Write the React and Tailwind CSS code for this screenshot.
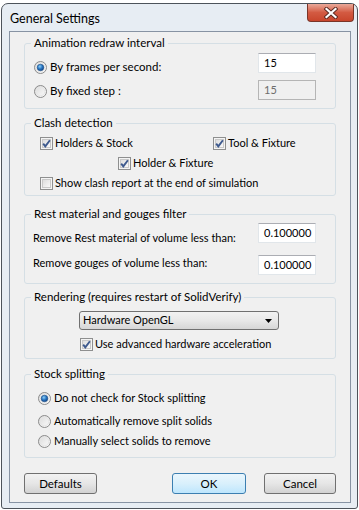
import React from "react";

const FONT = { fontFamily: "Lato, 'Liberation Sans', sans-serif" };

function Radio({ checked }) {
  return (
    <svg width="13" height="13" viewBox="0 0 13 13" className="shrink-0">
      <defs>
        <linearGradient id="rbg" x1="0" y1="0" x2="1" y2="1">
          <stop offset="0" stopColor="#d8d8d8" />
          <stop offset="1" stopColor="#ffffff" />
        </linearGradient>
        <radialGradient id="rdot" cx="0.4" cy="0.35" r="0.7">
          <stop offset="0" stopColor="#8fd0f7" />
          <stop offset="0.5" stopColor="#2a78c4" />
          <stop offset="1" stopColor="#0f3f80" />
        </radialGradient>
      </defs>
      <circle cx="6.5" cy="6.5" r="6" fill="url(#rbg)" stroke="#8b8b8b" strokeWidth="1" />
      <circle cx="6.5" cy="6.5" r="4.3" fill="none" stroke="#e6e6e6" strokeWidth="1" />
      {checked && <circle cx="6.5" cy="6.5" r="3.3" fill="url(#rdot)" stroke="#1d4f88" strokeWidth="0.6" />}
    </svg>
  );
}

function Check({ checked }) {
  return (
    <svg width="13" height="13" viewBox="0 0 13 13" className="shrink-0">
      <defs>
        <linearGradient id="cbg" x1="0" y1="0" x2="1" y2="1">
          <stop offset="0" stopColor="#dcdcdc" />
          <stop offset="1" stopColor="#fbfbfb" />
        </linearGradient>
      </defs>
      <rect x="0.5" y="0.5" width="12" height="12" fill="#f4f4f4" stroke="#8e8f8f" />
      <rect x="2.5" y="2.5" width="8" height="8" fill="url(#cbg)" stroke="#c9c9c9" />
      {checked && (
        <path d="M3.2 6.6 L5.3 9.4 L9.9 3.2" fill="none" stroke="#3e5a8e" strokeWidth="1.9" />
      )}
    </svg>
  );
}

function Group({ title, className, children }) {
  return (
    <div className={`relative mx-[14px] rounded-[3px] border border-[#d5dfe5] ${className}`}>
      <span className="absolute left-[6px] top-[-9px] bg-[#f0f0f0] px-[3px] text-[11.5px] leading-[16px] text-black">
        {title}
      </span>
      {children}
    </div>
  );
}

function Field({ value, disabled }) {
  return (
    <div
      className={`flex h-[20px] w-[58px] items-center border pl-[5px] text-[11px] ${
        disabled
          ? "border-[#b5b5b5] bg-[#f0f0f0] text-[#6d6d6d]"
          : "border-[#e1e6ea] border-t-[#abadb3] bg-white text-black"
      }`}
    >
      {value}
    </div>
  );
}

function Button({ label, primary }) {
  return (
    <div
      className={`flex h-[21px] items-center justify-center rounded-[3px] border text-[11.5px] text-black ${
        primary
          ? "border-[#3c7fb1] bg-gradient-to-b from-[#eaf6fd] via-[#d9f0fc] to-[#bee6fd]"
          : "border-[#707070] bg-gradient-to-b from-[#f2f2f2] via-[#e6e6e6] to-[#d2d2d2]"
      }`}
    >
      {label}
    </div>
  );
}

export default function App() {
  return (
    <div className="h-[510px] w-[359px] bg-white pt-[3px]" style={FONT}>
      <div className="ml-[1px] flex h-[506px] w-[357px] flex-col rounded-t-[7px] rounded-b-[3px] border border-[#4d535a] bg-[#e7edf3] pb-[5px] pl-[7px] pr-[6px]">
        {/* title bar */}
        <div className="flex h-[27px] items-start justify-between">
          <span className="pl-[1px] pt-[7px] text-[12.5px] leading-[16px] text-black">General Settings</span>
          <div className="mr-[-3px] flex h-[18px] w-[47px] items-center justify-center rounded-b-[4px] border border-t-0 border-[#7a3528] bg-gradient-to-b from-[#e9a99a] via-[#d35a42] to-[#c8452c]">
            <svg width="14" height="12" viewBox="0 0 14 12">
              <path d="M2.5 2 L11.5 10 M11.5 2 L2.5 10" stroke="#5a2a22" strokeWidth="4" strokeLinecap="square" />
              <path d="M2.5 2 L11.5 10 M11.5 2 L2.5 10" stroke="#ffffff" strokeWidth="2.2" strokeLinecap="square" />
            </svg>
          </div>
        </div>

        {/* client area */}
        <div className="flex flex-1 flex-col border border-[#8793a3] bg-[#f0f0f0] pb-[8px] text-[11px] text-black">
          <Group title="Animation redraw interval" className="mt-[11px] h-[66px]">
            <div className="flex justify-between pl-[9px] pr-[19px]">
              <div className="flex flex-col gap-[8px] pt-[15px]">
                <label className="flex h-[16px] items-center gap-[3px] text-[11.5px]">
                  <Radio checked />
                  By frames per second:
                </label>
                <label className="flex h-[16px] items-center gap-[3px] text-[11.5px]">
                  <Radio />
                  By fixed step :
                </label>
              </div>
              <div className="flex flex-col gap-[7px] pt-[9px]">
                <Field value="15" />
                <Field value="15" disabled />
              </div>
            </div>
          </Group>

          <Group title="Clash detection" className="mt-[14px] h-[73px]">
            <div className="flex flex-col pl-[15px] pt-[9px]">
              <div className="flex h-[20px] items-center">
                <label className="flex w-[173px] items-center gap-[2px]">
                  <Check checked />
                  Holders &amp; Stock
                </label>
                <label className="flex items-center gap-[2px]">
                  <Check checked />
                  Tool &amp; Fixture
                </label>
              </div>
              <label className="flex h-[20px] items-center gap-[2px] pl-[78px]">
                <Check checked />
                Holder &amp; Fixture
              </label>
              <label className="flex h-[20px] items-center gap-[2px]">
                <Check />
                Show clash report at the end of simulation
              </label>
            </div>
          </Group>

          <Group title="Rest material and gouges filter" className="mt-[18px] h-[70px]">
            <div className="flex justify-between pl-[8px] pr-[19px]">
              <div className="flex flex-col gap-[9px] pt-[15px]">
                <span className="h-[16px] leading-[16px]">Remove Rest material of volume less than:</span>
                <span className="h-[16px] leading-[16px]">Remove gouges of volume less than:</span>
              </div>
              <div className="flex flex-col gap-[12px] pt-[8px]">
                <Field value="0.100000" />
                <Field value="0.100000" />
              </div>
            </div>
          </Group>

          <Group title="Rendering (requires restart of SolidVerify)" className="mt-[13px] h-[62px]">
            <div className="flex flex-col pl-[54px] pt-[13px]">
              <div className="flex h-[19px] w-[200px] items-center justify-between rounded-[3px] border border-[#707070] bg-gradient-to-b from-[#f2f2f2] via-[#e8e8e8] to-[#d6d6d6] pl-[3px] pr-[6px]">
                <span>Hardware OpenGL</span>
                <svg width="7" height="4" viewBox="0 0 7 4">
                  <path d="M0 0 H7 L3.5 4 Z" fill="#000" />
                </svg>
              </div>
              <label className="mt-[6px] flex h-[16px] items-center gap-[2px] pl-[1px]">
                <Check checked />
                Use advanced hardware acceleration
              </label>
            </div>
          </Group>

          <Group title="Stock splitting" className="mt-[15px] h-[84px]">
            <div className="flex flex-col pl-[13px] pt-[13px]">
              <label className="flex h-[20px] items-center gap-[3px]">
                <Radio checked />
                Do not check for Stock splitting
              </label>
              <label className="mt-[3px] flex h-[20px] items-center gap-[3px]">
                <Radio />
                Automatically remove split solids
              </label>
              <label className="flex h-[20px] items-center gap-[3px]">
                <Radio />
                Manually select solids to remove
              </label>
            </div>
          </Group>

          <div className="mx-[14px] mt-[15px] flex justify-between">
            <div className="w-[73px]">
              <Button label="Defaults" />
            </div>
            <div className="ml-[75px] w-[74px]">
              <Button label="OK" primary />
            </div>
            <div className="ml-auto w-[72px]">
              <Button label="Cancel" />
            </div>
          </div>
        </div>
      </div>
    </div>
  );
}
